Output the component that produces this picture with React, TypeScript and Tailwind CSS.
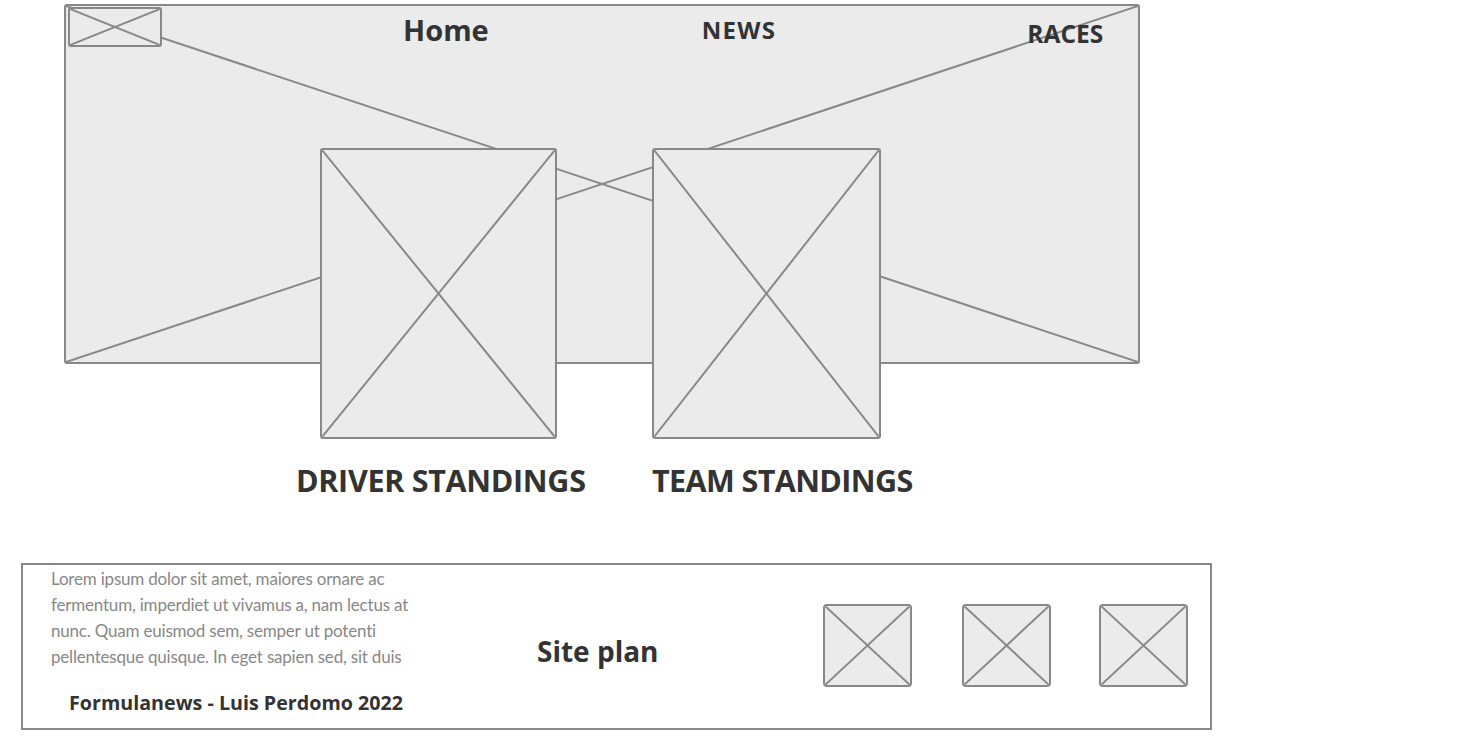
import React from "react";

function Cross({ className = "" }: { className?: string }) {
  return (
    <svg
      className={"absolute inset-0 h-full w-full " + className}
      viewBox="0 0 100 100"
      preserveAspectRatio="none"
    >
      <line x1="0" y1="0" x2="100" y2="100" stroke="#888888" strokeWidth="2" vectorEffect="non-scaling-stroke" />
      <line x1="100" y1="0" x2="0" y2="100" stroke="#888888" strokeWidth="2" vectorEffect="non-scaling-stroke" />
    </svg>
  );
}

function Placeholder({ className = "" }: { className?: string }) {
  return (
    <div className={"relative overflow-hidden border-2 border-[#888888] bg-[#ebebeb] " + className}>
      <Cross />
    </div>
  );
}

export default function App() {
  const head = { fontFamily: '"Open Sans", "Noto Sans", sans-serif' };
  return (
    <div className="h-[750px] w-[1468px] bg-white text-[#333333]" style={head}>
      <div className="pl-[64px] pt-[4px]">
        {/* Hero */}
        <div className="relative h-[360px] w-[1076px] rounded-[3px] border-2 border-[#888888] bg-[#ebebeb]">
          <Cross />
          <div className="relative flex items-start pl-[2px] pt-[1px]">
            <Placeholder className="h-[40px] w-[94px] rounded-[3px]" />
            <div className="ml-[241px] mt-[6px] text-[29px] font-bold leading-[34px]">Home</div>
            <div className="ml-[213px] mt-[9px] text-[24px] font-bold leading-[28px] tracking-[1.3px]">NEWS</div>
            <div className="ml-[251px] mt-[13px] text-[24.5px] font-bold leading-[28px]">RACES</div>
          </div>
        </div>
        {/* Standings */}
        <div className="relative -mt-[216px] flex">
          <Placeholder className="ml-[256px] h-[291px] w-[237px] rounded-[3px]" />
          <Placeholder className="ml-[95px] h-[291px] w-[229px] rounded-[3px]" />
        </div>
        <div className="mt-[23px] flex text-[30.5px] font-bold leading-[36px] tracking-[-0.3px]">
          <div className="ml-[232px] w-[356px]">DRIVER STANDINGS</div>
          <div className="tracking-[-0.6px]">TEAM STANDINGS</div>
        </div>
      </div>
      {/* Footer */}
      <div className="ml-[21px] mt-[65px] flex h-[167px] w-[1191px] border-2 border-[#888888] bg-white">
        <div className="flex w-[420px] flex-col pl-[28px] pt-[1px]">
          <p
            className="w-[400px] text-[17px] leading-[26px] text-[#888888] tracking-[-0.2px]"
            style={{ fontFamily: 'Lato, "Noto Sans", sans-serif' }}
          >
            Lorem ipsum dolor sit amet, maiores ornare ac
            <br />
            fermentum, imperdiet ut vivamus a, nam lectus at
            <br />
            nunc. Quam euismod sem, semper ut potenti
            <br />
            pellentesque quisque. In eget sapien sed, sit duis
          </p>
          <div className="ml-[18px] mt-[21px] text-[19.7px] font-bold leading-[24px]">
            Formulanews - Luis Perdomo 2022
          </div>
        </div>
        <div className="ml-[94px] mt-[68px] text-[28px] font-bold leading-[36px]">Site plan</div>
        <div className="ml-[164px] mt-[39px] flex">
          <Placeholder className="h-[83px] w-[89px] rounded-[4px]" />
          <Placeholder className="ml-[50px] h-[83px] w-[89px] rounded-[4px]" />
          <Placeholder className="ml-[48px] h-[83px] w-[89px] rounded-[4px]" />
        </div>
      </div>
    </div>
  );
}
